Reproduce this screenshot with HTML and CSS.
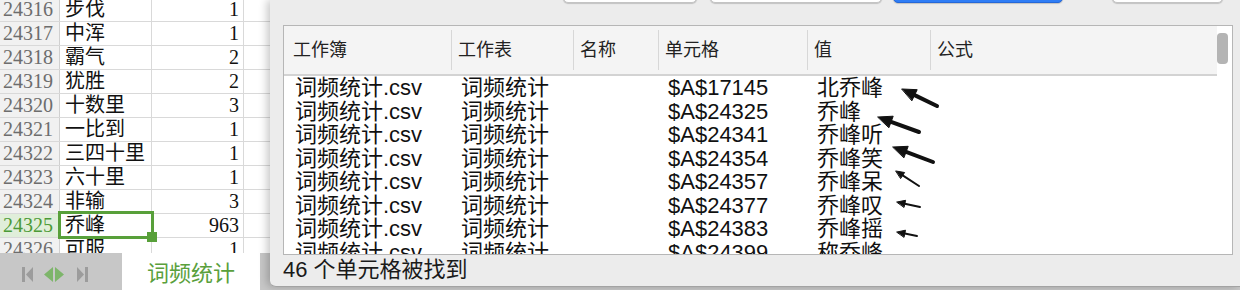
FILE: index.html
```html
<!DOCTYPE html>
<html lang="zh-CN">
  <head>
    <meta charset="UTF-8" />
    <meta name="viewport" content="width=device-width, initial-scale=1.0" />
    <title>查找全部</title>
    <link rel="stylesheet" href="styles.css">
  </head>
  <body>
    <div class="app">
      <section class="sheet">
        <div class="grid">
          <div class="rows">
            <div class="row"><span class="num">24316</span><span class="word">步伐</span><span class="count">1</span><span class="blank"></span></div>
            <div class="row"><span class="num">24317</span><span class="word">中浑</span><span class="count">1</span><span class="blank"></span></div>
            <div class="row"><span class="num">24318</span><span class="word">霸气</span><span class="count">2</span><span class="blank"></span></div>
            <div class="row"><span class="num">24319</span><span class="word">犹胜</span><span class="count">2</span><span class="blank"></span></div>
            <div class="row"><span class="num">24320</span><span class="word">十数里</span><span class="count">3</span><span class="blank"></span></div>
            <div class="row"><span class="num">24321</span><span class="word">一比到</span><span class="count">1</span><span class="blank"></span></div>
            <div class="row"><span class="num">24322</span><span class="word">三四十里</span><span class="count">1</span><span class="blank"></span></div>
            <div class="row"><span class="num">24323</span><span class="word">六十里</span><span class="count">1</span><span class="blank"></span></div>
            <div class="row"><span class="num">24324</span><span class="word">非输</span><span class="count">3</span><span class="blank"></span></div>
            <div class="row"><span class="num on">24325</span><span class="word sel">乔峰</span><span class="count">963</span><span class="blank"></span></div>
            <div class="row"><span class="num">24326</span><span class="word">可服</span><span class="count">1</span><span class="blank"></span></div>
          </div>
        </div>
        <div class="tabs">
          <svg class="nav" width="122" height="37" viewBox="0 0 122 37">
            <rect x="22" y="14" width="3" height="15" fill="#9c9c9c" />
            <polygon points="33,14 33,29 26,21.5" fill="#9c9c9c" />
            <polygon points="53,14 53,29 44,21.5" fill="#7db56a" />
            <polygon points="55,14 55,29 64,21.5" fill="#7db56a" />
            <polygon points="77,14 77,29 84,21.5" fill="#9c9c9c" />
            <rect x="85" y="14" width="3" height="15" fill="#9c9c9c" />
          </svg>
          <div class="tab">词频统计</div>
        </div>
      </section>

      <section class="dialog">
        <div class="buttons">
          <span class="btn btn-a"></span>
          <span class="btn btn-b"></span>
          <span class="btn btn-main"></span>
          <span class="btn btn-c"></span>
        </div>

        <div class="results">
          <div class="table">
            <div class="head">
              <span class="hc">工作簿</span>
              <span class="hc">工作表</span>
              <span class="hc">名称</span>
              <span class="hc">单元格</span>
              <span class="hc">值</span>
              <span class="hc">公式</span>
            </div>
            <div class="body">
              <div class="line"><span>词频统计.csv</span><span>词频统计</span><span></span><span>$A$17145</span><span>北乔峰</span><span></span></div>
              <div class="line"><span>词频统计.csv</span><span>词频统计</span><span></span><span>$A$24325</span><span>乔峰</span><span></span></div>
              <div class="line"><span>词频统计.csv</span><span>词频统计</span><span></span><span>$A$24341</span><span>乔峰听</span><span></span></div>
              <div class="line"><span>词频统计.csv</span><span>词频统计</span><span></span><span>$A$24354</span><span>乔峰笑</span><span></span></div>
              <div class="line"><span>词频统计.csv</span><span>词频统计</span><span></span><span>$A$24357</span><span>乔峰呆</span><span></span></div>
              <div class="line"><span>词频统计.csv</span><span>词频统计</span><span></span><span>$A$24377</span><span>乔峰叹</span><span></span></div>
              <div class="line"><span>词频统计.csv</span><span>词频统计</span><span></span><span>$A$24383</span><span>乔峰摇</span><span></span></div>
              <div class="line"><span>词频统计.csv</span><span>词频统计</span><span></span><span>$A$24399</span><span>称乔峰</span><span></span></div>
            </div>
          </div>
          <div class="scroll"><div class="thumb"></div></div>
        </div>

        <div class="status">46 个单元格被找到</div>

        <!-- hand-drawn arrows pointing at the matches -->
        <svg class="arrows" width="970" height="287" viewBox="0 0 970 287">
          <g fill="#111" stroke="#111" stroke-linecap="round">
            <line x1="667" y1="106" x2="644.6" y2="95.1" stroke-width="4" />
            <polygon points="632,89 647.2,89.7 642,100.5" stroke-width="1" />
            <line x1="649" y1="132" x2="621.1" y2="121.8" stroke-width="4" />
            <polygon points="608,117 623.2,116.2 619,127.4" stroke-width="1" />
            <line x1="663" y1="162" x2="636.1" y2="151.9" stroke-width="4" />
            <polygon points="623,147 638.2,146.3 634,157.5" stroke-width="1" />
            <line x1="649" y1="186" x2="632.7" y2="175.4" stroke-width="2" />
            <polygon points="626,171 634.6,172.5 630.8,178.3" stroke-width="1" />
            <line x1="650" y1="207" x2="634.8" y2="203.7" stroke-width="2" />
            <polygon points="627,202 635.6,200.3 634.1,207.1" stroke-width="1" />
            <line x1="647" y1="236" x2="634.8" y2="233.6" stroke-width="2" />
            <polygon points="627,232 635.5,230.2 634.1,237" stroke-width="1" />
          </g>
        </svg>
      </section>
    </div>
  </body>
</html>
```

FILE: styles.css
```css
body {
  margin: 0;
  width: 1240px;
  height: 290px;
  overflow: hidden;
  background: #c8c8c8;
}
.app {
  display: flex;
  height: 290px;
}

/* spreadsheet behind the dialog */
.sheet {
  width: 270px;
  flex: none;
  display: flex;
  flex-direction: column;
  background: #fff;
  font-family: "Liberation Serif", "Noto Sans CJK SC", serif;
}
.grid {
  height: 253px;
  overflow: hidden;
}
.rows {
  margin-top: -2px;
}
.row {
  display: grid;
  grid-template-columns: 60px 92px 92px 26px;
  height: 24px;
  box-sizing: border-box;
  border-bottom: 1px solid #d9d9d9;
  font-size: 20px;
  line-height: 23px;
  color: #111;
}
.row span {
  white-space: nowrap;
}
.num {
  background: #f1f1f1;
  color: #6d6d6d;
  padding-left: 3px;
  border-right: 1px solid #d0d0d0;
}
.num.on {
  background: #e0eeda;
  color: #4b9a36;
}
.word {
  padding-left: 5px;
  border-right: 1px solid #d9d9d9;
}
.count {
  text-align: right;
  padding-right: 4px;
  border-right: 1px solid #d9d9d9;
}
.sel {
  position: relative;
}
.sel::after {
  content: "";
  position: absolute;
  top: -3px;
  left: -2px;
  right: -3px;
  bottom: -2px;
  border: 3px solid #58a03a;
}
.sel::before {
  content: "";
  position: absolute;
  right: -6px;
  bottom: -5px;
  width: 10px;
  height: 10px;
  background: #58a03a;
  z-index: 1;
}
.tabs {
  display: flex;
  height: 37px;
  background: #c7c7c7;
}
.nav {
  flex: none;
}
.tab {
  width: 138px;
  background: #fff;
  color: #5aa03c;
  font-family: "Noto Sans CJK SC", sans-serif;
  font-size: 22px;
  line-height: 37px;
  text-align: center;
}

/* find-all dialog */
.dialog {
  flex: 1;
  position: relative;
  height: 287px;
  box-sizing: border-box;
  background: #ececec;
  border-bottom: 1px solid #a3a3a3;
  border-bottom-left-radius: 6px;
  box-shadow: -3px 0 8px rgba(0, 0, 0, 0.22);
  font-family: "Liberation Sans", "Noto Sans CJK SC", sans-serif;
  color: #151515;
}
.buttons {
  display: flex;
  height: 22px;
  margin-top: -19px;
}
.btn {
  height: 22px;
  box-sizing: border-box;
  background: #fff;
  border: 1px solid #c4c4c4;
  border-radius: 5px;
  box-shadow: 0 1px 1px rgba(0, 0, 0, 0.18);
}
.btn-a {
  margin-left: 293px;
  width: 134px;
}
.btn-b {
  margin-left: 13px;
  width: 172px;
}
.btn-main {
  margin-left: 11px;
  width: 170px;
  background: #2f7df6;
  border-color: #2568d8;
}
.btn-c {
  margin-left: 49px;
  width: 111px;
}
.results {
  display: flex;
  height: 230px;
  box-sizing: border-box;
  margin: 22px 7px 0 13px;
  border: 1px solid #b6b6b6;
  background: #fff;
}
.table {
  flex: 1;
  overflow: hidden;
}
.head,
.line {
  display: grid;
  grid-template-columns: 167px 122px 85px 149px 123px 1fr;
}
.head {
  height: 50px;
  box-sizing: border-box;
  align-items: center;
  background: #f4f4f4;
  border-bottom: 2px solid #d3d3d3;
  font-size: 18px;
  color: #222;
}
.hc {
  height: 40px;
  line-height: 40px;
  padding-left: 9px;
}
.hc + .hc {
  border-left: 1px solid #d7d7d7;
  padding-left: 6px;
}
.body {
  height: 178px;
  overflow: hidden;
}
.line {
  height: 23.5px;
  font-size: 22px;
  line-height: 23.5px;
  color: #111;
}
.line span {
  padding-left: 10px;
  white-space: nowrap;
}
.line span:first-child {
  padding-left: 11px;
}
.scroll {
  width: 15px;
}
.thumb {
  width: 11px;
  height: 31px;
  margin-top: 7px;
  background: #b4b4b4;
  border-radius: 4px;
}
.status {
  margin-top: 2px;
  padding-left: 13px;
  font-size: 22px;
  line-height: 26px;
  color: #1a1a1a;
}
.arrows {
  position: absolute;
  left: 0;
  top: 0;
  pointer-events: none;
}
```
